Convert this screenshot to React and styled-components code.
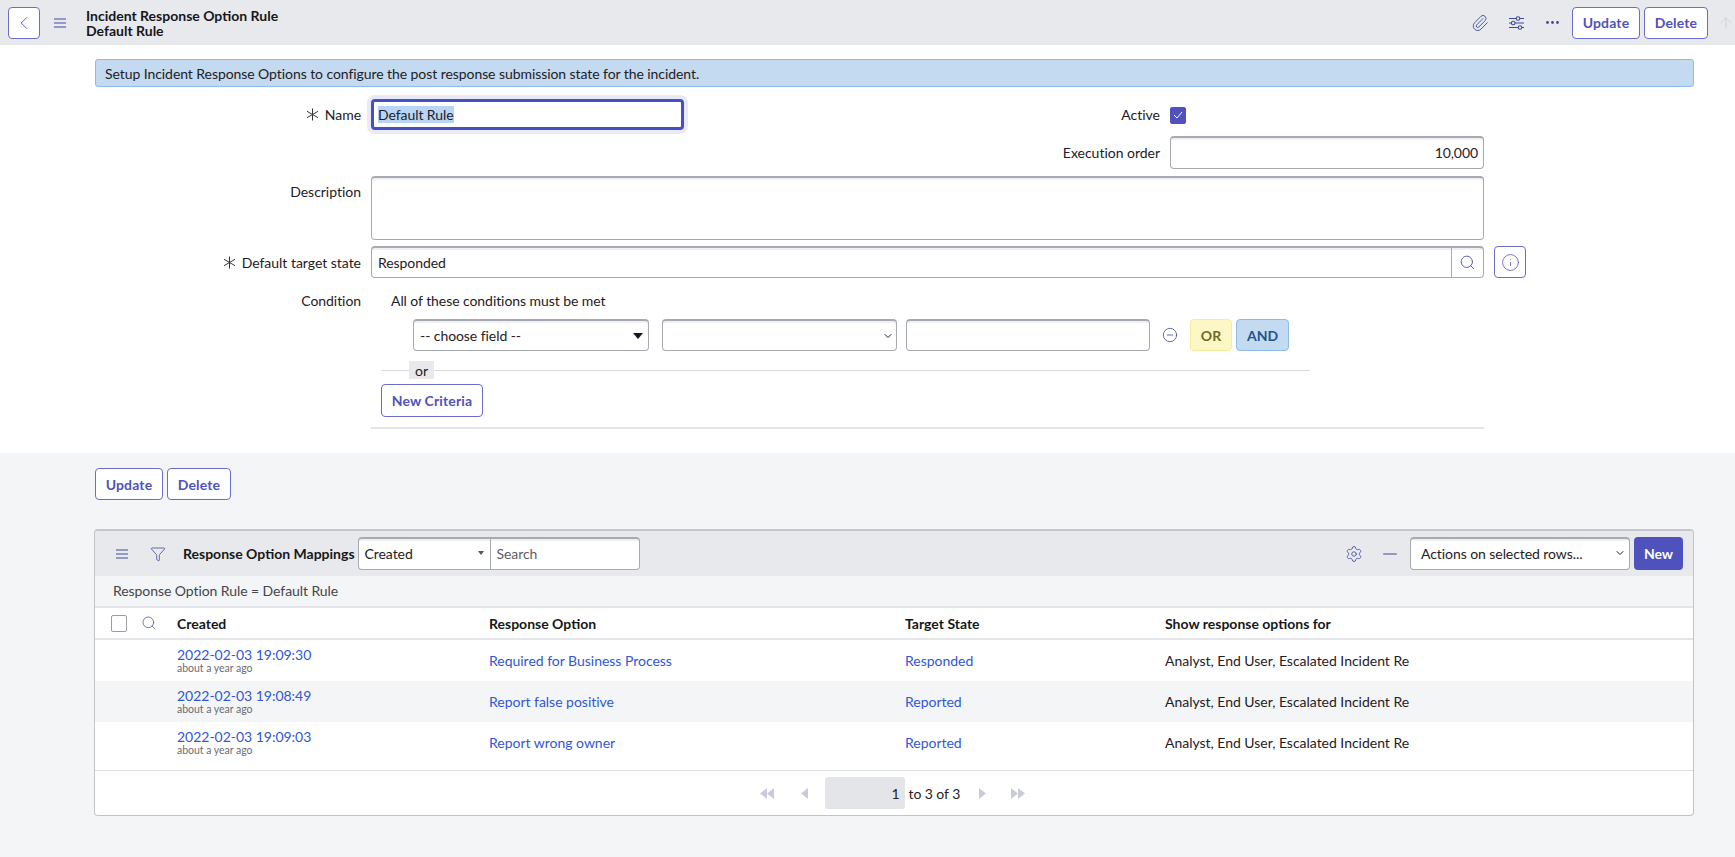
import styled, { createGlobalStyle } from "styled-components";
import {
  ArrowUp,
  ChevronDown,
  ChevronLeft,
  CircleMinus,
  Filter,
  Info,
  Minus,
  Paperclip,
  Search,
  Settings,
} from "lucide-react";

const GlobalStyle = createGlobalStyle`
  html, body {
    margin: 0;
    padding: 0;
    height: 100%;
    background: #f4f5f7;
  }
  body {
    font-family: Lato, "Liberation Sans", sans-serif;
    font-size: 14px;
    letter-spacing: -0.07px;
    color: #1f2025;
    overflow: hidden;
  }
  * {
    box-sizing: border-box;
  }
`;

const indigo = "#4f52bd";
const iconInk = "#3f4a9c";

const Page = styled.div`
  width: 1735px;
  height: 857px;
  display: flex;
  flex-direction: column;
`;

const Header = styled.header`
  height: 45px;
  flex: none;
  background: #e8e9ed;
  display: flex;
  align-items: center;
  padding: 0 0 0 8px;
`;

const OutlineButton = styled.button`
  height: ${({ $tall }) => ($tall ? 33 : 32)}px;
  width: ${({ $w }) => ($w ? `${$w}px` : "auto")};
  padding: 0;
  flex: none;
  border: 1px solid #6a6dc9;
  border-radius: 4px;
  background: #fff;
  color: ${indigo};
  font: 700 14px Lato, sans-serif;
  letter-spacing: 0.15px;
  display: flex;
  align-items: center;
  justify-content: center;
`;

const HeaderIcon = styled.span`
  width: ${({ $w }) => $w || 36}px;
  flex: none;
  display: flex;
  align-items: center;
  justify-content: ${({ $end }) => ($end ? "flex-end" : "center")};
  color: ${({ $muted }) => ($muted ? "#c9cbd6" : iconInk)};
`;

const TitleBlock = styled.div`
  margin-left: 6px;
  font-weight: 700;
  font-size: 14px;
  line-height: 15px;
  letter-spacing: 0;
  color: #16171b;
  flex: 1;
`;

const HeaderActions = styled.div`
  display: flex;
  align-items: center;
  gap: 4px;
`;

const FormSection = styled.section`
  height: 408px;
  flex: none;
  background: #fff;
  padding-top: 14px;
`;

const InfoMessage = styled.div`
  margin: 0 41px 0 95px;
  height: 28px;
  padding-left: 9px;
  display: flex;
  align-items: center;
  background: #c3daf0;
  border: 1px solid #8dbde6;
  border-radius: 3px;
`;

const FormGrid = styled.div`
  margin-top: 12px;
  display: grid;
  grid-template-columns: 361px 313px 466px 314px 32px;
  column-gap: 10px;
  grid-template-rows: 31px 33px 65px 32px;
  row-gap: 6px;
`;

const Label = styled.label`
  display: flex;
  align-items: ${({ $top }) => ($top ? "flex-start" : "center")};
  justify-content: flex-end;
  gap: 6px;
  padding-top: ${({ $top }) => ($top ? 8 : 0)}px;
  letter-spacing: -0.02px;
  color: #1f2025;
  svg {
    color: #33343a;
  }
`;

const TextField = styled.div`
  grid-column: ${({ $span }) => ($span ? `span ${$span}` : "auto")};
  display: flex;
  align-items: center;
  justify-content: ${({ $right }) => ($right ? "flex-end" : "flex-start")};
  padding: 0 5px 2px 6px;
  background: #fff;
  border: 1px solid #a8aab1;
  border-top-width: 2px;
  border-radius: 4px;
  box-shadow: inset 0 2px 0 #eff0f2;
  color: ${({ $muted }) => ($muted ? "#6a6b73" : "#1f2025")};
`;

const DescriptionField = styled(TextField)`
  margin-top: 1px;
`;

const FocusField = styled.div`
  display: flex;
  align-items: center;
  padding-left: 4px;
  background: #fff;
  border: 3px solid #4450c4;
  border-radius: 4px;
  box-shadow: 0 0 0 4px #e9eaf8;
`;

const Selected = styled.span`
  background: #b9d5f5;
  line-height: 17px;
`;

const CheckCell = styled.div`
  display: flex;
  align-items: center;
  padding-top: 1px;
`;

const Checkbox = styled.span`
  width: 16px;
  height: 17px;
  border-radius: 2px;
  background: ${({ $on }) => ($on ? indigo : "#fff")};
  border: 1px solid ${({ $on }) => ($on ? indigo : "#9a9ca5")};
  color: #fff;
  display: flex;
  align-items: center;
  justify-content: center;
`;

const Spacer = styled.div``;

const LookupField = styled(TextField)`
  grid-column: span 3;
  padding: 0 0 0 6px;
  justify-content: space-between;
`;

const LookupButton = styled.span`
  width: 32px;
  height: 100%;
  flex: none;
  border-left: 1px solid #a8aab1;
  display: flex;
  align-items: center;
  justify-content: center;
  color: ${iconInk};
`;

const ConditionBlock = styled.div`
  margin-top: 14px;
  display: grid;
  grid-template-columns: 361px 1113px;
  column-gap: 10px;
`;

const ConditionLabel = styled.div`
  text-align: right;
  line-height: 18px;
`;

const ConditionBody = styled.div`
  display: flex;
  flex-direction: column;
`;

const ConditionTitle = styled.div`
  padding-left: 20px;
  line-height: 18px;
`;

const CriteriaRow = styled.div`
  margin-top: 9px;
  padding-left: 42px;
  display: flex;
  align-items: center;
`;

const SelectBox = styled(TextField)`
  width: ${({ $w }) => $w}px;
  height: 32px;
  margin-right: ${({ $mr }) => $mr || 0}px;
  flex: none;
  justify-content: space-between;
  padding: 0 ${({ $pr }) => $pr || 5}px 0 6px;
`;

const SelectCaret = styled.span`
  width: 0;
  height: 0;
  border-left: ${({ $small }) => ($small ? 3 : 5)}px solid transparent;
  border-right: ${({ $small }) => ($small ? 3 : 5)}px solid transparent;
  border-top: ${({ $small }) => ($small ? 4 : 6)}px solid ${({ $small }) => ($small ? "#55565e" : "#17181c")};
`;

const MinusWrap = styled.span`
  width: 40px;
  flex: none;
  display: flex;
  justify-content: center;
  color: #3f4a9c;
`;

const LogicButton = styled.span`
  height: 32px;
  width: ${({ $w }) => $w}px;
  margin-right: 4px;
  border-radius: 4px;
  font-weight: 700;
  letter-spacing: 0;
  display: flex;
  align-items: center;
  justify-content: center;
  background: ${({ $and }) => ($and ? "#c3daf0" : "#fdf7c5")};
  border: 1px solid ${({ $and }) => ($and ? "#8dbde6" : "#f5ec9e")};
  color: ${({ $and }) => ($and ? "#24528c" : "#6e6a28")};
`;

const OrRule = styled.div`
  margin: 10px 0 0 10px;
  width: 929px;
  height: 18px;
  display: flex;
  align-items: center;
  padding-left: 28px;
  background: linear-gradient(#d9dade, #d9dade) center / 100% 1px no-repeat;
`;

const OrTag = styled.span`
  width: 25px;
  height: 18px;
  background: #e8e9ed;
  display: flex;
  align-items: center;
  justify-content: center;
`;

const CriteriaAction = styled.div`
  margin: 5px 0 0 10px;
`;

const SectionRule = styled.div`
  margin-top: 10px;
  height: 2px;
  background: #e4e5e9;
`;

const BottomActions = styled.div`
  height: 76px;
  flex: none;
  display: flex;
  align-items: flex-start;
  gap: 4px;
  padding: 15px 0 0 95px;
`;

const ListPanel = styled.section`
  margin: 0 41px 0 94px;
  height: 287px;
  flex: none;
  background: #fff;
  border: 1px solid #c3c4ca;
  border-top: 2px solid #c6c7cd;
  border-radius: 4px;
  display: flex;
  flex-direction: column;
  overflow: hidden;
`;

const ListToolbar = styled.div`
  height: 45px;
  flex: none;
  background: #e8e9ed;
  display: flex;
  align-items: center;
  padding: 0 10px 0 0;
`;

const ListTitle = styled.span`
  margin: 0 3px 0 16px;
  font-weight: 700;
  letter-spacing: 0;
  color: #16171b;
  white-space: nowrap;
`;

const SearchGroup = styled(TextField)`
  width: 282px;
  height: 33px;
  padding: 0;
  align-items: stretch;
  flex: none;
`;

const SearchColumn = styled.div`
  width: 132px;
  flex: none;
  border-right: 1px solid #a8aab1;
  padding: 0 6px 2px;
  display: flex;
  align-items: center;
  justify-content: space-between;
`;

const SearchInput = styled.div`
  flex: 1;
  padding: 0 0 2px 6px;
  display: flex;
  align-items: center;
  color: #5d5e66;
`;

const ToolbarGrow = styled.div`
  flex: 1;
`;

const ActionsSelect = styled(SelectBox)`
  height: 33px;
  margin-left: 2px;
  padding: 0 3px 2px 10px;
`;

const NewButton = styled.button`
  margin-left: 4px;
  width: 49px;
  height: 33px;
  border: 0;
  border-radius: 4px;
  background: ${indigo};
  color: #fff;
  font: 700 14px Lato, sans-serif;
`;

const Breadcrumb = styled.div`
  height: 32px;
  flex: none;
  padding: 0 0 1px 18px;
  display: flex;
  align-items: center;
  background: #f4f5f7;
  border-bottom: 2px solid #e4e5e9;
  color: #44454d;
`;

const tableColumns = "82px 312px 416px 260px 1fr";

const HeadRow = styled.div`
  height: 32px;
  flex: none;
  display: grid;
  grid-template-columns: ${tableColumns};
  align-items: center;
  font-weight: 700;
  letter-spacing: 0;
  color: #16171b;
  border-bottom: 2px solid #e4e5e9;
`;

const HeadTools = styled.div`
  display: flex;
  align-items: center;
  gap: 14px;
  padding-left: 16px;
  color: ${iconInk};
`;

const Row = styled.div`
  height: 41px;
  flex: none;
  display: grid;
  grid-template-columns: ${tableColumns};
  align-items: center;
  letter-spacing: -0.02px;
  background: ${({ $odd }) => ($odd ? "#f4f5f7" : "#fff")};
`;

const Spread = styled.div`
  grid-column: 2;
  display: flex;
  flex-direction: column;
  margin-top: -1px;
`;

const LinkText = styled.a`
  color: #2f57d9;
  line-height: 16px;
`;

const Ago = styled.span`
  font-size: 10.5px;
  line-height: 10px;
  color: #6b6c74;
`;

const RowGap = styled.div`
  height: 8px;
  flex: none;
  border-bottom: 1px solid #dcdde1;
`;

const Pager = styled.div`
  flex: 1;
  display: flex;
  align-items: center;
  justify-content: center;
  padding-right: 4px;
`;

const PagerArrow = styled.span`
  width: ${({ $w }) => $w}px;
  flex: none;
  display: flex;
  justify-content: center;
  svg {
    fill: #c9cbdb;
  }
`;

const PageBox = styled.div`
  width: 80px;
  height: 32px;
  margin: 0 4px 0 2px;
  padding-right: 5px;
  background: #e4e5e9;
  border-radius: 3px;
  display: flex;
  align-items: center;
  justify-content: flex-end;
`;

const PageCount = styled.span`
  width: 55px;
  flex: none;
`;

const MenuIcon = () => (
  <svg width="12" height="10" viewBox="0 0 12 10" stroke="currentColor" strokeWidth="1.1" fill="none">
    <path d="M0 1h12M0 5h12M0 9h12" />
  </svg>
);

const RequiredMark = () => (
  <svg width="13" height="13" viewBox="0 0 13 13" stroke="currentColor" strokeWidth="1" fill="none">
    <path d="M6.5 0.5v12M1 3.3l11 6.4M1 9.7l11-6.4" />
  </svg>
);

const PersonalizeIcon = () => (
  <svg width="15" height="14" viewBox="0 0 15 14" stroke="currentColor" strokeWidth="1.1" fill="none">
    <path d="M0 2.5h7.2M10.8 2.5H15M0 7h2.5M6 7h9M0 11.5h9.2M12.8 11.5H15" />
    <circle cx="9" cy="2.5" r="1.8" />
    <circle cx="4.2" cy="7" r="1.8" />
    <circle cx="11" cy="11.5" r="1.8" />
  </svg>
);

const Triangle = ({ dir = "left", double }) => {
  const one = dir === "left" ? "M7 0v11L0 5.5z" : "M0 0v11l7-5.5z";
  const two = dir === "left" ? "M14 0v11L7 5.5z" : "M7 0v11l7-5.5z";
  return (
    <svg width={double ? 14 : 7} height="11" viewBox={`0 0 ${double ? 14 : 7} 11`}>
      <path d={one} />
      {double && <path d={two} />}
    </svg>
  );
};

const rows = [
  { created: "2022-02-03 19:09:30", option: "Required for Business Process", state: "Responded" },
  { created: "2022-02-03 19:08:49", option: "Report false positive", state: "Reported", odd: true },
  { created: "2022-02-03 19:09:03", option: "Report wrong owner", state: "Reported" },
];

export default function App() {
  return (
    <Page>
      <GlobalStyle />
      <Header>
        <OutlineButton $w={32}>
          <ChevronLeft size={22} strokeWidth={1} />
        </OutlineButton>
        <HeaderIcon $w={40}>
          <MenuIcon />
        </HeaderIcon>
        <TitleBlock>
          Incident Response Option Rule
          <br />
          Default Rule
        </TitleBlock>
        <HeaderActions>
          <HeaderIcon $w={32}>
            <Paperclip size={18} strokeWidth={1.2} />
          </HeaderIcon>
          <HeaderIcon $w={32}>
            <PersonalizeIcon />
          </HeaderIcon>
          <HeaderIcon $w={32}>
            <svg width="13" height="3" viewBox="0 0 13 3" fill="currentColor">
              <circle cx="1.5" cy="1.5" r="1.4" />
              <circle cx="6.5" cy="1.5" r="1.4" />
              <circle cx="11.5" cy="1.5" r="1.4" />
            </svg>
          </HeaderIcon>
          <OutlineButton $w={68}>Update</OutlineButton>
          <OutlineButton $w={64}>Delete</OutlineButton>
          <HeaderIcon $w={23} $muted $end>
            <ArrowUp size={18} strokeWidth={1} />
          </HeaderIcon>
        </HeaderActions>
      </Header>

      <FormSection>
        <InfoMessage>
          Setup Incident Response Options to configure the post response submission state for the incident.
        </InfoMessage>
        <FormGrid>
          <Label>
            <RequiredMark />
            Name
          </Label>
          <FocusField>
            <Selected>Default Rule</Selected>
          </FocusField>
          <Label>Active</Label>
          <CheckCell>
            <Checkbox $on>
              <svg width="10" height="8" viewBox="0 0 10 8" fill="none" stroke="currentColor" strokeWidth="1">
                <path d="M1 4l3 3 5-6" />
              </svg>
            </Checkbox>
          </CheckCell>
          <Spacer />
          <Spacer />
          <Spacer />
          <Label>Execution order</Label>
          <TextField $right>10,000</TextField>
          <Spacer />
          <Label $top>Description</Label>
          <DescriptionField $span={3} />
          <Spacer />
          <Label>
            <RequiredMark />
            Default target state
          </Label>
          <LookupField>
            Responded
            <LookupButton>
              <Search size={17} strokeWidth={1.2} />
            </LookupButton>
          </LookupField>
          <OutlineButton $w={32}>
            <Info size={19} strokeWidth={1} />
          </OutlineButton>
        </FormGrid>

        <ConditionBlock>
          <ConditionLabel>Condition</ConditionLabel>
          <ConditionBody>
            <ConditionTitle>All of these conditions must be met</ConditionTitle>
            <CriteriaRow>
              <SelectBox $w={236} $mr={13}>
                -- choose field --
                <SelectCaret />
              </SelectBox>
              <SelectBox $w={235} $mr={9} $pr={2}>
                <span />
                <ChevronDown size={12} strokeWidth={2} />
              </SelectBox>
              <SelectBox $w={244} />
              <MinusWrap>
                <CircleMinus size={16} strokeWidth={1.2} />
              </MinusWrap>
              <LogicButton $w={42}>OR</LogicButton>
              <LogicButton $w={53} $and>
                AND
              </LogicButton>
            </CriteriaRow>
            <OrRule>
              <OrTag>or</OrTag>
            </OrRule>
            <CriteriaAction>
              <OutlineButton $w={102} $tall>
                New Criteria
              </OutlineButton>
            </CriteriaAction>
            <SectionRule />
          </ConditionBody>
        </ConditionBlock>
      </FormSection>

      <BottomActions>
        <OutlineButton $w={68}>Update</OutlineButton>
        <OutlineButton $w={64}>Delete</OutlineButton>
      </BottomActions>

      <ListPanel>
        <ListToolbar>
          <HeaderIcon $w={54}>
            <MenuIcon />
          </HeaderIcon>
          <HeaderIcon $w={18}>
            <Filter size={16} strokeWidth={1.2} />
          </HeaderIcon>
          <ListTitle>Response Option Mappings</ListTitle>
          <SearchGroup>
            <SearchColumn>
              Created
              <SelectCaret $small />
            </SearchColumn>
            <SearchInput>Search</SearchInput>
          </SearchGroup>
          <ToolbarGrow />
          <HeaderIcon $w={36}>
            <Settings size={18} strokeWidth={1.1} />
          </HeaderIcon>
          <HeaderIcon $w={36}>
            <Minus size={22} strokeWidth={1.2} />
          </HeaderIcon>
          <ActionsSelect $w={220}>
            Actions on selected rows...
            <ChevronDown size={12} strokeWidth={2} />
          </ActionsSelect>
          <NewButton>New</NewButton>
        </ListToolbar>
        <Breadcrumb>Response Option Rule = Default Rule</Breadcrumb>
        <HeadRow>
          <HeadTools>
            <Checkbox />
            <Search size={16} strokeWidth={1.1} />
          </HeadTools>
          <span>Created</span>
          <span>Response Option</span>
          <span>Target State</span>
          <span>Show response options for</span>
        </HeadRow>
        {rows.map((row) => (
          <Row key={row.created} $odd={row.odd}>
            <Spread>
              <LinkText>{row.created}</LinkText>
              <Ago>about a year ago</Ago>
            </Spread>
            <LinkText>{row.option}</LinkText>
            <LinkText>{row.state}</LinkText>
            <span>Analyst, End User, Escalated Incident Re</span>
          </Row>
        ))}
        <RowGap />
        <Pager>
          <PagerArrow $w={37}>
            <Triangle double />
          </PagerArrow>
          <PagerArrow $w={37}>
            <Triangle />
          </PagerArrow>
          <PageBox>1</PageBox>
          <PageCount>to 3 of 3</PageCount>
          <PagerArrow $w={37}>
            <Triangle dir="right" />
          </PagerArrow>
          <PagerArrow $w={35}>
            <Triangle dir="right" double />
          </PagerArrow>
        </Pager>
      </ListPanel>
    </Page>
  );
}
